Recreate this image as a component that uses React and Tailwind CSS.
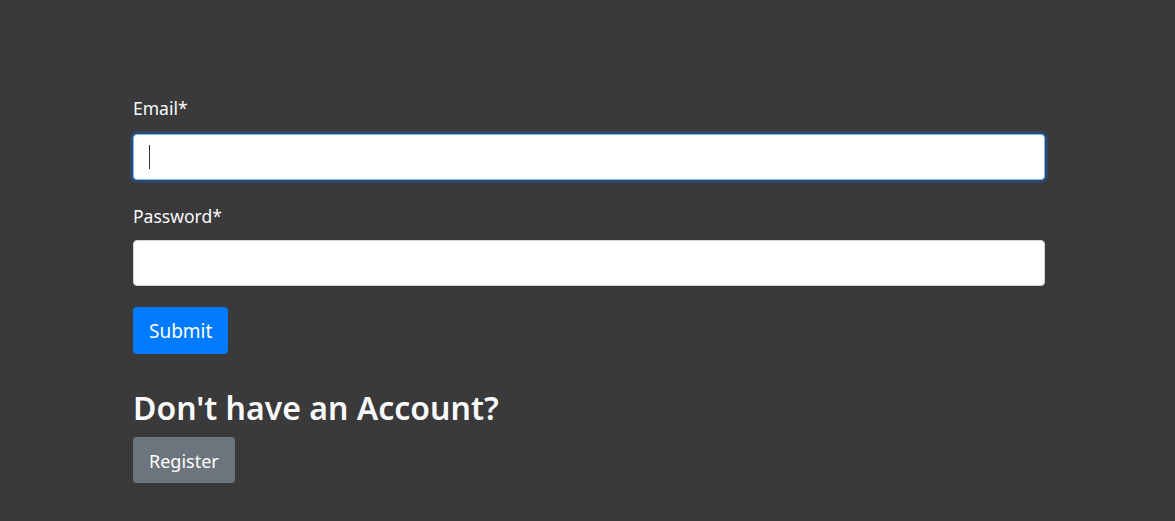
import React from 'react';

function App() {
  return (
    <div className="min-h-screen w-full bg-[#3a3a3a] font-['Noto_Sans','Liberation_Sans',sans-serif] text-[#f8f9fa]">
      <div className="w-[912px] pt-[96px] ml-[133px]">
        <form onSubmit={(e) => e.preventDefault()}>
          {/* email */}
          <label className="block text-[17.5px] leading-[24px]">Email*</label>
          <div className="relative mt-[14px]">
            <input
              type="email"
              className="block h-[46px] w-full rounded-[4px] border border-[#80bdff] bg-white px-3 text-[#495057] shadow-[0_0_0_3px_rgba(0,123,255,0.25)] outline-none"
            />
            {/* caret */}
            <span className="absolute left-[16px] top-[11px] h-[24px] w-px bg-[#333]" />
          </div>

          {/* password */}
          <label className="mt-[24px] block text-[17.5px] leading-[24px]">Password*</label>
          <input
            type="password"
            className="mt-[12px] block h-[46px] w-full rounded-[4px] border border-[#ced4da] bg-white px-3 text-[#495057] outline-none"
          />

          <button
            type="submit"
            className="mt-[21px] flex h-[47px] items-center rounded-[4px] bg-[#007bff] px-4 pt-[2px] text-[19px] text-white"
          >
            Submit
          </button>
        </form>

        {/* register */}
        <h2 className="mt-[34px] text-[32px] font-semibold leading-[40px]">Don't have an Account?</h2>
        <button className="mt-[9px] flex h-[46px] items-center rounded-[4px] bg-[#6c757d] px-4 pt-[2px] text-[18px] text-white">
          Register
        </button>
      </div>
    </div>
  );
}

export default App;
